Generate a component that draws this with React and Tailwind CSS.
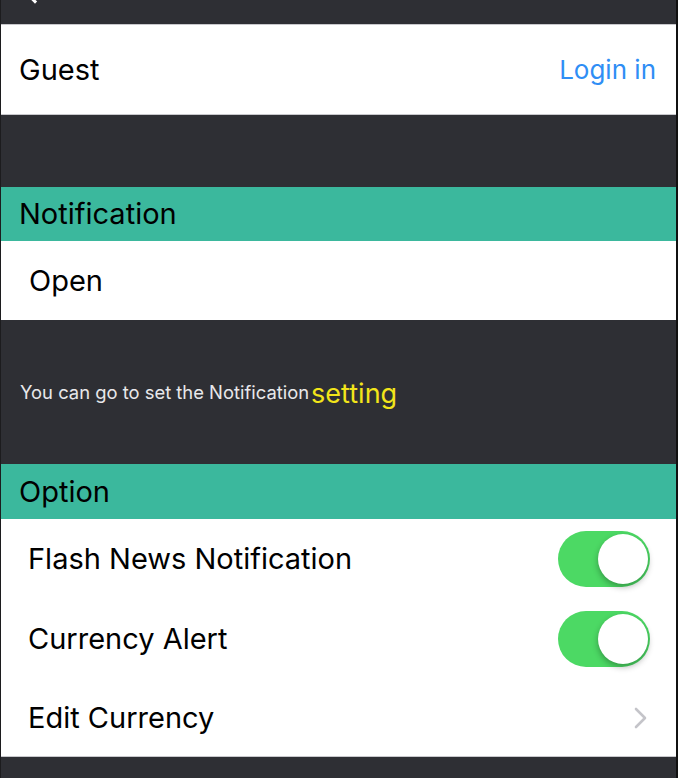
const Toggle = () => (
  <div className="relative w-[92px] h-[56px] rounded-full bg-[#4cd964]">
    <div className="absolute right-[2px] top-[3px] w-[50px] h-[50px] rounded-full bg-white shadow-[0_3px_6px_rgba(0,0,0,0.3)]" />
  </div>
);

const Chevron = () => (
  <svg width="18" height="24" viewBox="0 0 18 24" fill="none">
    <path d="M4 3l9 9-9 9" stroke="#c4c4c9" strokeWidth="2.6" strokeLinecap="round" strokeLinejoin="round" />
  </svg>
);

const App = () => {
  return (
    <div
      className="w-[678px] h-[778px] overflow-hidden bg-[#2e2f34] border-l border-l-[#1c1c1e] border-r-2 border-r-[#111] flex flex-col"
      style={{ fontFamily: "Inter, 'Noto Sans', sans-serif" }}
    >
      {/* top bar */}
      <div className="h-[24px] relative shrink-0">
        <div className="absolute left-[30px] -top-[6px] w-[8px] h-[8px] rotate-45 border-l-[3px] border-b-[3px] border-white" />
      </div>

      {/* guest */}
      <div className="h-[91px] shrink-0 bg-white border-t border-b border-[#c8c8cc] flex items-center justify-between pl-[18px] pr-[20px]">
        <span className="text-[29px] text-black">Guest</span>
        <span className="text-[26px] text-[#2f8ef5]">Login in</span>
      </div>

      <div className="h-[72px] shrink-0" />

      {/* notification */}
      <div className="h-[54px] shrink-0 bg-[#3bb89d] flex items-center pl-[18px]">
        <span className="text-[29px] text-black">Notification</span>
      </div>
      <div className="h-[79px] shrink-0 bg-white flex items-center pl-[28px]">
        <span className="text-[29px] text-black">Open</span>
      </div>

      <div className="h-[144px] shrink-0 flex items-center pl-[19px] pt-[2px]">
        <span className="text-[18.4px] text-[#e8e8ea]">You can go to set the Notification</span>
        <span className="text-[27px] text-[#f2e51a] ml-[2px] leading-none">setting</span>
      </div>

      {/* option */}
      <div className="h-[55px] shrink-0 bg-[#3bb89d] flex items-center pl-[18px]">
        <span className="text-[29px] text-black">Option</span>
      </div>
      <div className="shrink-0 bg-white border-b border-[#c8c8cc]">
        <div className="h-[80px] flex items-center justify-between pl-[27px] pr-[26px]">
          <span className="text-[29px] text-black">Flash News Notification</span>
          <Toggle />
        </div>
        <div className="h-[80px] flex items-center justify-between pl-[27px] pr-[26px]">
          <span className="text-[29px] text-black">Currency Alert</span>
          <Toggle />
        </div>
        <div className="h-[77px] flex items-center justify-between pl-[27px] pr-[26px]">
          <span className="text-[29px] text-black">Edit Currency</span>
          <Chevron />
        </div>
      </div>
    </div>
  );
};

export default App;
